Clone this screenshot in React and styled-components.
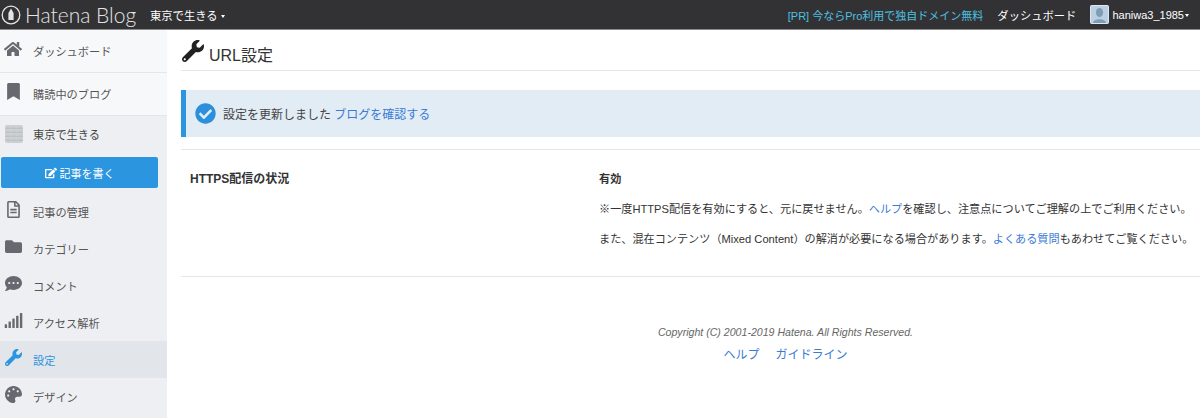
import styled, { createGlobalStyle } from "styled-components";
import { FaHome, FaBookmark, FaRegFileAlt, FaFolder, FaCommentDots, FaSignal, FaWrench, FaPalette, FaCheckCircle, FaEdit } from "react-icons/fa";

const GlobalStyle = createGlobalStyle`
    html, body {
        margin: 0;
        padding: 0;
        background: #fff;
    }
    body {
        font-family: "Liberation Sans", "Noto Sans CJK JP", sans-serif;
        color: #333;
        font-size: 12px;
    }
    a {
        color: #3a7bd5;
        text-decoration: none;
    }
`

const Page = styled.div`
    width: 1200px;
    height: 418px;
    overflow: hidden;
`

const Header = styled.header`
    height: 30px;
    background: #323235;
    border-bottom: 1px solid #8a8a8a;
    display: flex;
    align-items: center;
    color: #fff;
    padding: 0 11px 0 1px;
    box-sizing: border-box;
`

const Logo = styled.div`
    display: flex;
    align-items: center;
    gap: 4px;
    font-family: "Lato", sans-serif;
    font-weight: 300;
    font-size: 21px;
    color: #e4e4e4;
    width: 149px;
    flex: none;
`

const Caret = styled.span`
    display: inline-block;
    width: 0;
    height: 0;
    margin-left: ${(p) => p.$gap || 3}px;
    border-left: 2px solid transparent;
    border-right: 2px solid transparent;
    border-top: 3px solid #fff;
    vertical-align: middle;
`

const BlogName = styled.div`
    font-size: 11.3px;
    flex: 1;
`

const HeaderLinks = styled.div`
    display: flex;
    align-items: center;
    font-size: 11.3px;
`

const Promo = styled.span`
    color: #4fc0e0;
    font-size: 11px;
    margin-right: 14px;
`

const HeaderLink = styled.span`
    color: #fff;
    margin-right: 14px;
`

const Avatar = styled.svg`
    width: 19px;
    height: 19px;
    border-radius: 2px;
    margin-right: 3px;
`

const UserName = styled.span`
    font-size: 11px;
`

const Body = styled.div`
    display: flex;
    height: 388px;
`

const Sidebar = styled.nav`
    width: 167px;
    flex: none;
    background: #eeeff2;
`

const TopRow = styled.div`
    height: 42px;
    background: #f7f8fa;
    border-bottom: 1px solid #e4e7ea;
    display: flex;
    align-items: center;
    color: #555;
    font-size: 11.2px;
`

const BlogRow = styled.div`
    height: 36px;
    display: flex;
    align-items: center;
    font-size: 11.2px;
    color: #444;
`

const IconSlot = styled.span`
    width: 33px;
    flex: none;
    display: flex;
    justify-content: center;
    padding-right: 7px;
    box-sizing: border-box;
    font-size: ${(p) => p.$size || 17}px;
    color: ${(p) => (p.$active ? "#2b95e0" : "#666a70")};
    margin-top: -5px;
`

const BlogThumb = styled.span`
    width: 18px;
    height: 18px;
    margin: 0 10px 0 5px;
    border-radius: 2px;
    background-color: #ccd0d2;
    background-image: radial-gradient(ellipse 4px 2px at 50% 100%, #bcc1c4 60%, transparent 100%);
    background-size: 6px 4px;
`

const WriteButton = styled.button`
    display: flex;
    align-items: center;
    justify-content: center;
    gap: 3px;
    width: 157px;
    height: 31px;
    margin: 5px 0 5px 1px;
    background: #2b95e0;
    color: #fff;
    border: none;
    border-radius: 2px;
    font: inherit;
    font-size: 11px;
    padding: 0;
`

const MenuRow = styled.div`
    height: 37px;
    display: flex;
    align-items: center;
    font-size: 11.2px;
    background: ${(p) => (p.$active ? "#e2e5e9" : "transparent")};
    color: ${(p) => (p.$active ? "#2b95e0" : "#555")};
`

const Main = styled.main`
    flex: 1;
    padding: 0 0 0 14px;
    min-width: 0;
`

const Title = styled.h1`
    margin: 0;
    height: 41px;
    border-bottom: 1px solid #e4e7ea;
    box-sizing: border-box;
    display: flex;
    align-items: center;
    gap: 5px;
    font-weight: 400;
    font-size: 16px;
    color: #333;
    padding: 7px 0 0 1px;
    svg {
        font-size: 22px;
        color: #222;
        margin-top: -5px;
    }
`

const Alert = styled.div`
    margin-top: 19px;
    height: 47px;
    background: #e2ecf5;
    border-left: 5px solid #2b95e0;
    display: flex;
    align-items: center;
    padding-left: 9px;
    gap: 7px;
    font-size: 12px;
    color: #444;
    svg {
        font-size: 21px;
        color: #2b8fdc;
    }
`

const Setting = styled.section`
    margin-top: 12px;
    border-top: 1px solid #e4e7ea;
    border-bottom: 1px solid #e4e7ea;
    height: 128px;
    padding: 14px 0 0 9px;
    box-sizing: border-box;
    display: flex;
`

const SettingLabel = styled.div`
    width: 409px;
    flex: none;
    font-weight: 700;
    font-size: 12px;
    line-height: 30px;
    color: #333;
`

const SettingValue = styled.div`
    flex: 1;
    font-size: 11.15px;
    line-height: 30px;
    white-space: nowrap;
    color: #333;
`

const Strong = styled.div`
    font-weight: 700;
`

const Footer = styled.footer`
    padding-top: 45px;
    padding-left: 190px;
    text-align: center;
`

const Copyright = styled.div`
    font-style: italic;
    font-size: 10.6px;
    color: #666;
    line-height: 20px;
`

const FooterLinks = styled.div`
    display: flex;
    justify-content: center;
    gap: 16px;
    font-size: 12px;
    line-height: 22px;
    margin-top: 2px;
`

const menu = [
    { label: "記事の管理", icon: <FaRegFileAlt /> },
    { label: "カテゴリー", icon: <FaFolder /> },
    { label: "コメント", icon: <FaCommentDots /> },
    { label: "アクセス解析", icon: <FaSignal />, size: 19 },
    { label: "設定", icon: <FaWrench />, active: true },
    { label: "デザイン", icon: <FaPalette /> },
]

const App = () => {
    return (
        <Page>
            <GlobalStyle />
            <Header>
                <Logo>
                    <svg width="20" height="20" viewBox="0 0 20 20">
                        <circle cx="10" cy="10" r="8.8" fill="none" stroke="#e4e4e4" strokeWidth="1.3" />
                        <path d="M10 3.5 L12.6 8 V15 H7.4 V8 Z" fill="#e4e4e4" />
                    </svg>
                    Hatena Blog
                </Logo>
                <BlogName>東京で生きる<Caret /></BlogName>
                <HeaderLinks>
                    <Promo>[PR] 今ならPro利用で独自ドメイン無料</Promo>
                    <HeaderLink>ダッシュボード</HeaderLink>
                    <Avatar viewBox="0 0 19 19">
                        <rect x="0.5" y="0.5" width="18" height="18" fill="#b9d0e2" stroke="#dfe8ee" />
                        <ellipse cx="9.5" cy="7.5" rx="3.6" ry="4.6" fill="#7f9db5" />
                        <path d="M3 18 C3.5 13 15.5 13 16 18 Z" fill="#7f9db5" />
                    </Avatar>
                    <UserName>haniwa3_1985<Caret $gap={1} /></UserName>
                </HeaderLinks>
            </Header>
            <Body>
                <Sidebar>
                    <TopRow><IconSlot $size={18}><FaHome /></IconSlot>ダッシュボード</TopRow>
                    <TopRow><IconSlot $size={17}><FaBookmark /></IconSlot>購読中のブログ</TopRow>
                    <BlogRow><BlogThumb />東京で生きる</BlogRow>
                    <WriteButton><FaEdit size={12} />記事を書く</WriteButton>
                    {menu.map((item) => (
                        <MenuRow key={item.label} $active={item.active}>
                            <IconSlot $active={item.active} $size={item.size}>{item.icon}</IconSlot>
                            {item.label}
                        </MenuRow>
                    ))}
                </Sidebar>
                <Main>
                    <Title><FaWrench />URL設定</Title>
                    <Alert>
                        <FaCheckCircle />
                        <span>設定を更新しました <a href="#">ブログを確認する</a></span>
                    </Alert>
                    <Setting>
                        <SettingLabel>HTTPS配信の状況</SettingLabel>
                        <SettingValue>
                            <Strong>有効</Strong>
                            <div>※一度HTTPS配信を有効にすると、元に戻せません。<a href="#">ヘルプ</a>を確認し、注意点についてご理解の上でご利用ください。</div>
                            <div>また、混在コンテンツ（Mixed Content）の解消が必要になる場合があります。<a href="#">よくある質問</a>もあわせてご覧ください。</div>
                        </SettingValue>
                    </Setting>
                    <Footer>
                        <Copyright>Copyright (C) 2001-2019 Hatena. All Rights Reserved.</Copyright>
                        <FooterLinks>
                            <a href="#">ヘルプ</a>
                            <a href="#">ガイドライン</a>
                        </FooterLinks>
                    </Footer>
                </Main>
            </Body>
        </Page>
    )
}

export default App
